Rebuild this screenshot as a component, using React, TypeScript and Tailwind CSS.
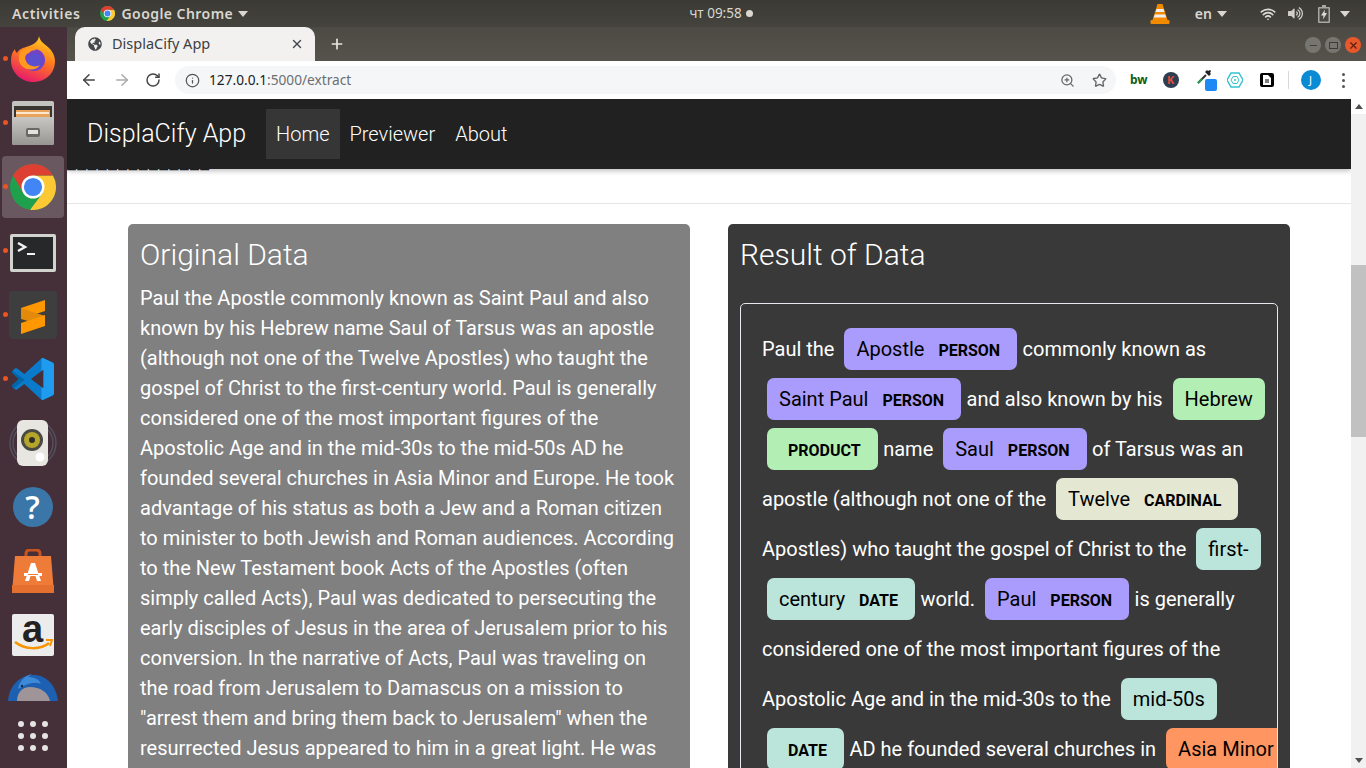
import { ArrowLeft, ArrowRight, RotateCw, Info, ZoomIn, Star, X, Plus, Minus, Wifi } from "lucide-react";
import { FaGlobeAmericas, FaVolumeUp } from "react-icons/fa";

const ROBOTO = "font-['Roboto',sans-serif]";
const UI = "font-['Noto_Sans',sans-serif]";

function Caret({ className = "" }: { className?: string }) {
  return (
    <svg width="10" height="6" viewBox="0 0 10 6" className={className}>
      <path d="M0 0h10L5 6z" fill="currentColor" />
    </svg>
  );
}

function ChromeLogo({ size }: { size: number }) {
  return (
    <svg width={size} height={size} viewBox="0 0 48 48">
      <circle cx="24" cy="24" r="24" fill="#1fa04c" />
      <path d="M44.8 12A24 24 0 0 1 21 47.8L34.4 30 24 12z" fill="#fcc934" />
      <path d="M3.2 12a24 24 0 0 1 41.6 0H24L13.6 30z" fill="#dd3f33" />
      <circle cx="24" cy="24" r="12" fill="#fff" />
      <circle cx="24" cy="24" r="9.5" fill="#4285f4" />
    </svg>
  );
}

function FirefoxIcon() {
  return (
    <svg width="46" height="46" viewBox="0 0 46 46">
      <defs>
        <linearGradient id="ffa" x1="0.7" y1="0" x2="0.3" y2="1">
          <stop offset="0" stopColor="#ffd21f" />
          <stop offset="0.45" stopColor="#ff7a1f" />
          <stop offset="1" stopColor="#e6156f" />
        </linearGradient>
      </defs>
      <path d="M29 0c1 6 6 8 10 12 5 5 6 10 6 13 0 12-9 21-22 21C11 46 1 36 1 25c0-5 1-9 4-12 0 2 1 3 2 4 2-4 6-5 9-6 6-2 12-4 13-11z" fill="url(#ffa)" />
      <circle cx="24" cy="24" r="11" fill="#7542c6" />
      <circle cx="25" cy="25" r="7.500" fill="#5b4fd0" />
      <path d="M11 15c5-3 11-4 16-1-4 0-7 1-8 3-3 1-5 4-3 8 2 5 9 7 14 4-4 6-14 6-19 0-3-4-3-10 0-14z" fill="#ff9a1f" />
    </svg>
  );
}

function FilesIcon() {
  return (
    <svg width="42" height="44" viewBox="0 0 42 44">
      <defs>
        <linearGradient id="fbox" x1="0" y1="0" x2="0" y2="1">
          <stop offset="0" stopColor="#c9c7c3" />
          <stop offset="1" stopColor="#989692" />
        </linearGradient>
      </defs>
      <rect x="0" y="0" width="42" height="44" rx="2" fill="#c4c2be" />
      <rect x="2" y="5" width="38" height="14" fill="#3a3532" />
      <rect x="4" y="9" width="34" height="8" fill="#e8a35d" />
      <rect x="4" y="11" width="33" height="2" fill="#fbe8cf" />
      <rect x="0" y="16" width="42" height="28" rx="2" fill="url(#fbox)" />
      <rect x="14" y="27" width="14" height="9" rx="2" fill="#6a6865" />
      <rect x="16" y="29" width="10" height="4" fill="#e4e2de" />
    </svg>
  );
}

function TerminalIcon() {
  return (
    <svg width="46" height="38" viewBox="0 0 46 38" className="mt-1">
      <rect width="46" height="38" rx="2" fill="#d2d2ce" />
      <rect x="3" y="3" width="40" height="32" fill="#26282a" />
      <path d="M8 9l7 4-7 4" fill="none" stroke="#f2f2f2" strokeWidth="2.500" />
      <rect x="17" y="19" width="8" height="2" fill="#f2f2f2" />
    </svg>
  );
}

function SublimeIcon() {
  return (
    <svg width="48" height="48" viewBox="0 0 48 48">
      <rect width="48" height="48" rx="4" fill="#3e3e3e" />
      <path d="M36 9v11L12 28V17z" fill="#ff9800" />
      <path d="M12 28l24 7v-10L12 17z" fill="#e38a0a" />
      <path d="M36 24v11L12 43V32z" fill="#ff9800" />
    </svg>
  );
}

function VscodeIcon() {
  const d =
    "M70.9 99.3c1.6.6 3.4.6 5-.2l20.6-9.9c2.1-1 3.5-3.2 3.5-5.6V16.4c0-2.4-1.4-4.6-3.5-5.6L75.9.9c-2.1-1-4.5-.8-6.4.6-.3.2-.5.4-.7.6L29.4 38 12.2 25c-1.6-1.2-3.8-1.1-5.3.2l-5.5 5c-1.8 1.7-1.8 4.5 0 6.2L16.2 50 1.4 63.6c-1.8 1.7-1.8 4.5 0 6.1l5.5 5c1.5 1.4 3.7 1.5 5.3.3L29.4 62l39.4 36c.6.6 1.3 1 2.1 1.3zM75 27.3 45.1 50 75 72.7z";
  return (
    <svg width="42" height="42" viewBox="0 0 100 100">
      <defs>
        <clipPath id="vsc">
          <path d={d} clipRule="evenodd" />
        </clipPath>
      </defs>
      <path d={d} fill="#0a7bcb" fillRule="evenodd" />
      <g clipPath="url(#vsc)">
        <rect x="70" y="0" width="30" height="100" fill="#1f9cf0" />
        <path d="M0 30l30 22L0 75z" fill="#0065a9" />
      </g>
    </svg>
  );
}

function SpeakerIcon() {
  return (
    <svg width="50" height="46" viewBox="0 0 50 46">
      <circle cx="25" cy="23" r="23" fill="none" stroke="#6f7f95" strokeOpacity="0.4" strokeWidth="1.5" />
      <circle cx="25" cy="23" r="20" fill="none" stroke="#6f7f95" strokeOpacity="0.4" strokeWidth="1.5" />
      <rect x="9" y="0" width="31" height="46" rx="6" fill="#e8e6e0" />
      <circle cx="24" cy="20" r="11" fill="#4a4a44" />
      <circle cx="24" cy="20" r="8" fill="#b5a52b" />
      <circle cx="24" cy="20" r="3" fill="#2f2d25" />
      <circle cx="32" cy="37" r="4.5" fill="#fff" />
    </svg>
  );
}

function HelpIcon() {
  return (
    <div className="flex h-10 w-10 items-center justify-center rounded-full bg-[#3a76a8] font-['Open_Sans',sans-serif] text-[32px] font-semibold leading-none text-white">
      ?
    </div>
  );
}

function StoreIcon() {
  return (
    <svg width="42" height="44" viewBox="0 0 42 44">
      <path d="M14 8V5c0-3 2-4 4-4h6c2 0 4 1 4 4v3" fill="none" stroke="#c9531f" strokeWidth="3" />
      <path d="M3 7h36l3 37H0z" fill="#ef7b38" />
      <path d="M0 36h42v8H0z" fill="#e46f2e" />
      <path d="M19 14h4l6 18h-4l-1.500-5h-5L17 32h-4z" fill="#fff" />
      <rect x="12" y="24" width="18" height="3" fill="#fff" />
      <rect x="16" y="25" width="10" height="1" fill="#ef7b38" />
    </svg>
  );
}

function AmazonIcon() {
  return (
    <div className="relative h-[42px] w-[42px] rounded-[2px] bg-[#ececec]">
      <span className="absolute left-0 right-0 top-[-3px] text-center font-['Liberation_Sans',sans-serif] text-[38px] font-bold leading-[36px] text-[#222]">
        a
      </span>
      <svg width="42" height="42" viewBox="0 0 42 42" className="absolute left-0 top-0">
        <path d="M3 28c10 8 26 8 34 1" fill="none" stroke="#f79400" strokeWidth="2.500" />
        <path d="M34 26l6 0-2 6" fill="none" stroke="#f79400" strokeWidth="2" />
      </svg>
    </div>
  );
}

function ThunderbirdIcon() {
  return (
    <svg width="50" height="30" viewBox="0 0 50 30">
      <path d="M0 28C1 14 10 3 24 2c14-1 24 10 26 26z" fill="#1d5fb0" />
      <path d="M9 28c0-8 5-14 13-14 10 0 18 5 20 14z" fill="#9f9498" />
      <path d="M10 16c1-7 7-14 14-15l-4 3c6 0 11 2 13 7-7-3-15 0-23 5z" fill="#3d8ad8" />
      <circle cx="14" cy="13" r="1.200" fill="#1b2b44" />
    </svg>
  );
}

function VlcIcon() {
  return (
    <svg width="20" height="22" viewBox="0 0 20 22">
      <path d="M7.500 1h5l5 16h-15z" fill="#f28a00" />
      <path d="M6.500 6h7l1 3h-9zM4.800 11.500h10.400l1 3H3.800z" fill="#ededed" />
      <rect x="0.500" y="17" width="19" height="4" rx="1" fill="#f28a00" />
    </svg>
  );
}

function BatteryIcon() {
  return (
    <svg width="12" height="18" viewBox="0 0 12 18">
      <path d="M4 0h4v2h3a1 1 0 0 1 1 1v14a1 1 0 0 1-1 1H1a1 1 0 0 1-1-1V3a1 1 0 0 1 1-1h3z" fill="#aaa8a2" />
      <rect x="1.500" y="3.500" width="9" height="13" fill="#4a4842" />
      <path d="M7 4.500 3 10.500h2.500L5 14.500l4-6.500H6.500z" fill="#dedcd6" />
    </svg>
  );
}

function TopBar() {
  return (
    <div className={`flex h-[27px] shrink-0 items-center justify-between bg-gradient-to-b from-[#3b3a35] to-[#45433d] text-[14px] font-semibold text-[#d9d7d0] ${UI}`}>
      <div className="flex items-center">
        <span className="ml-3 tracking-[0.6px]">Activities</span>
        <span className="ml-[20px]"><ChromeLogo size={15} /></span>
        <span className="ml-[6px] tracking-[0.45px]">Google Chrome</span>
        <Caret className="ml-[5px]" />
      </div>
      <div className="ml-[44px] flex items-center gap-[4px] text-[13.500px] font-normal">
        чт 09:58
        <span className="h-[7px] w-[7px] rounded-full bg-[#d9d7d0]" />
      </div>
      <div className="mr-[16px] flex items-center">
        <VlcIcon />
        <span className="ml-[25px]">en</span>
        <Caret className="ml-[5px]" />
        <Wifi size={16} strokeWidth={2.5} className="ml-[33px] text-[#dedcd6]" />
        <FaVolumeUp size={15} className="ml-[12px] text-[#cfcdc6]" />
        <span className="ml-[15px]"><BatteryIcon /></span>
        <Caret className="ml-[10px]" />
      </div>
    </div>
  );
}

function DockItem({ children, dot, active }: { children: React.ReactNode; dot?: boolean; active?: boolean }) {
  return (
    <div className="relative flex h-16 shrink-0 items-center justify-center">
      {active && <div className="absolute bottom-[1px] left-[2px] right-[3px] top-[1px] rounded-[4px] bg-white/20" />}
      {dot && <div className="absolute left-[3px] top-[29px] h-[5px] w-[5px] rounded-full bg-[#e95420]" />}
      <div className="relative flex items-center justify-center pr-[2px]">{children}</div>
    </div>
  );
}

function Dock() {
  return (
    <div className="relative w-[67px] shrink-0 overflow-hidden bg-[#452f39]">
      <DockItem dot><FirefoxIcon /></DockItem>
      <DockItem dot><FilesIcon /></DockItem>
      <DockItem dot active><ChromeLogo size={46} /></DockItem>
      <DockItem dot><TerminalIcon /></DockItem>
      <DockItem dot><SublimeIcon /></DockItem>
      <DockItem dot><VscodeIcon /></DockItem>
      <DockItem><SpeakerIcon /></DockItem>
      <DockItem><HelpIcon /></DockItem>
      <DockItem><StoreIcon /></DockItem>
      <DockItem><AmazonIcon /></DockItem>
      <div className="flex h-16 shrink-0 justify-center pr-[2px] pt-[6px]"><ThunderbirdIcon /></div>
      <div className="absolute left-[18px] top-[694px] grid grid-cols-3 gap-[6px]">
        {Array.from({ length: 9 }).map((_, i) => (
          <span key={i} className="h-[6px] w-[6px] rounded-full bg-[#e6e4e2]" />
        ))}
      </div>
    </div>
  );
}

function ChromeFrame() {
  return (
    <div className="shrink-0">
      <div className={`flex h-[34px] items-end justify-between bg-gradient-to-b from-[#4c4a44] to-[#56534c] ${UI}`}>
        <div className="flex h-full items-center">
          <div className="ml-[8px] flex h-full w-[240px] items-center rounded-t-[10px] bg-[#f2f1f0] pl-[13px] pr-[11px] text-[14.500px] text-[#3c4043]">
            <FaGlobeAmericas size={14} className="text-[#45484c]" />
            <span className="ml-[10px] flex-1">DisplaCify App</span>
            <X size={14} strokeWidth={2.5} className="text-[#45484c]" />
          </div>
          <Plus size={16} strokeWidth={2.5} className="ml-[14px] text-[#e8e6e1]" />
        </div>
        <div className="mb-[8px] mr-[5px] flex gap-[4px]">
          <span className="flex h-4 w-4 items-center justify-center rounded-full bg-[#77756f] text-[#3c3b37]"><Minus size={11} /></span>
          <span className="flex h-4 w-4 items-center justify-center rounded-full bg-[#77756f] text-[#3c3b37]"><span className="h-[7px] w-[9px] border border-[#3c3b37]" /></span>
          <span className="flex h-4 w-4 items-center justify-center rounded-full bg-[#e9582a] text-[#5a2010]"><X size={11} strokeWidth={2.5} /></span>
        </div>
      </div>
      <div className={`flex h-[38px] items-center bg-white ${UI}`}>
        <ArrowLeft size={18} strokeWidth={2} className="ml-[13px] text-[#444]" />
        <ArrowRight size={18} strokeWidth={2} className="ml-[15px] text-[#aaa]" />
        <RotateCw size={16} strokeWidth={2.200} className="ml-[14px] text-[#444]" />
        <div className="ml-[14px] flex h-7 w-[941px] items-center rounded-full bg-[#f5f6f7] pl-[10px] pr-[8px] text-[13.700px]">
          <Info size={15} className="text-[#555]" />
          <span className="ml-[9px] text-[#202124]">127.0.0.1</span>
          <span className="text-[#6b6e72]">:5000/extract</span>
          <ZoomIn size={15} className="ml-auto text-[#666]" />
          <Star size={15} strokeWidth={2.200} className="ml-[17px] mr-[1px] text-[#666]" />
        </div>
        <span className={`ml-[14px] text-[12px] font-bold leading-none text-[#0f5c10] ${UI}`}>bw</span>
        <span className="ml-[15px] flex h-4 w-4 items-center justify-center rounded-full bg-[#2c3e50] text-[11px] font-bold text-[#e74c3c]">K</span>
        <span className="relative ml-[18px] h-5 w-5">
          <svg width="16" height="16" viewBox="0 0 16 16" className="absolute left-0 top-[-2px]">
            <path d="M1 15 9 7" stroke="#333" strokeWidth="2" />
            <path d="M1 15 5 11" stroke="#2a9d55" strokeWidth="2" />
            <path d="M8 4l4 4 2-2-1-1 1-2-1-1-2 1-1-1z" fill="#222" />
          </svg>
          <span className="absolute left-[8px] top-[9px] h-3 w-3 rounded-[2px] bg-[#1e88f5]" />
        </span>
        <svg width="16" height="16" viewBox="0 0 16 16" className="ml-[10px]">
          <path d="M4 1h8l4 7-4 7H4L0 8z" fill="none" stroke="#35c3d0" strokeWidth="1.500" />
          <path d="M6 4.500h4l2 3.500-2 3.500H6L4 8z" fill="none" stroke="#35c3d0" />
          <circle cx="8" cy="8" r="1" fill="#35c3d0" />
        </svg>
        <span className="ml-[17px] flex h-[14px] w-[14px] items-center justify-center rounded-[2px] bg-black">
          <svg width="8" height="10" viewBox="0 0 8 10">
            <path d="M0 0h5l3 3v7H0z" fill="#fff" />
            <path d="M2 5h4M2 7h4" stroke="#000" />
          </svg>
        </span>
        <span className="ml-[14px] h-[18px] w-px bg-[#d8d8d8]" />
        <span className="ml-[12px] flex h-5 w-5 items-center justify-center rounded-full bg-[#0b8bd3] text-[11px] text-white">J</span>
        <span className="ml-[21px] flex flex-col gap-[3px]">
          <i className="h-[3px] w-[3px] rounded-full bg-[#555]" />
          <i className="h-[3px] w-[3px] rounded-full bg-[#555]" />
          <i className="h-[3px] w-[3px] rounded-full bg-[#555]" />
        </span>
      </div>
    </div>
  );
}

function Ent({ text, label, bg }: { text: string; label: string; bg: string }) {
  return (
    <mark className={`ml-[5px] mr-[0.5px] rounded-[7px] px-3 py-[9px] leading-none text-[#000] box-decoration-clone ${bg}`}>
      {text}{" "}
      <span className="ml-[9px] mr-[5px] align-middle text-[16px] font-bold leading-none">{label}</span>
    </mark>
  );
}

const PERSON = "bg-[#aa9cfc]";
const PRODUCT = "bg-[#b3efb5]";
const CARDINAL = "bg-[#e4e7d2]";
const DATE = "bg-[#bbe4da]";
const LOC = "bg-[#ff9561]";

function Scrollbar() {
  return (
    <div className="flex w-[15px] shrink-0 flex-col bg-[#f1f1f1]">
      <div className="flex h-[15px] items-center justify-center bg-white text-[#505050]">
        <svg width="8" height="5" viewBox="0 0 8 5"><path d="M4 0l4 5H0z" fill="currentColor" /></svg>
      </div>
      <div className="mt-[151px] h-[172px] bg-[#c1c1c1]" />
      <div className="mt-auto flex h-[15px] items-center justify-center text-[#505050]">
        <svg width="8" height="5" viewBox="0 0 8 5"><path d="M0 0h8L4 5z" fill="currentColor" /></svg>
      </div>
    </div>
  );
}

function Page() {
  return (
    <div className="flex min-h-0 flex-1">
      <div className={`flex min-w-0 flex-1 flex-col overflow-hidden bg-white ${ROBOTO}`}>
        <nav className="relative z-10 flex h-[70px] shrink-0 items-center bg-[#212121] pl-5 text-white shadow-[0_2px_5px_rgba(0,0,0,0.25)]">
          <span className="text-[25px] font-light">DisplaCify App</span>
          <ul className="ml-5 flex text-[20px] font-light">
            <li className="flex h-[50px] items-center bg-[#363636] px-[10px]">Home</li>
            <li className="flex h-[50px] items-center px-[10px]">Previewer</li>
            <li className="flex h-[50px] items-center px-[10px]">About</li>
          </ul>
        </nav>
        <div className="h-[35px] shrink-0 overflow-hidden border-b border-[#e6e6e6]">
          <div className="mt-[-8px] font-['Liberation_Sans',sans-serif] text-[16px] leading-[16px] tracking-[1.350px] text-[#212529]">––––––––––––––</div>
        </div>
        <div className="grid min-h-0 flex-1 grid-cols-2 gap-[38px] overflow-hidden px-[61px] pt-5">
          <div className="rounded-t-[5px] bg-[#808080] px-3 pt-3 text-white">
            <h3 className="mb-[9px] text-[30px] font-light leading-[38px]">Original Data</h3>
            <p className="text-[20px] leading-[30px]">
              Paul the Apostle commonly known as Saint Paul and also known by his Hebrew name Saul of Tarsus was an apostle (although not one of the Twelve Apostles) who taught the gospel of Christ to the first-century world. Paul is generally considered one of the most important figures of the Apostolic Age and in the mid-30s to the mid-50s AD he founded several churches in Asia Minor and Europe. He took advantage of his status as both a Jew and a Roman citizen to minister to both Jewish and Roman audiences. According to the New Testament book Acts of the Apostles (often simply called Acts), Paul was dedicated to persecuting the early disciples of Jesus in the area of Jerusalem prior to his conversion. In the narrative of Acts, Paul was traveling on the road from Jerusalem to Damascus on a mission to "arrest them and bring them back to Jerusalem" when the resurrected Jesus appeared to him in a great light. He was
            </p>
          </div>
          <div className="rounded-t-[5px] bg-[#393939] px-3 pt-3 text-white">
            <h3 className="mb-[29px] text-[30px] font-light leading-[38px]">Result of Data</h3>
            <div className="overflow-hidden rounded-[5px] border border-[#e6e9ef] pl-[21px] pr-[2px] pt-5 text-[20px] leading-[50px]">
              Paul the{" "}
              <Ent text="Apostle" label="PERSON" bg={PERSON} /> commonly known as{" "}
              <Ent text={"Saint\u00a0Paul"} label="PERSON" bg={PERSON} /> and also known by his{" "}
              <Ent text="Hebrew" label="PRODUCT" bg={PRODUCT} /> name{" "}
              <Ent text="Saul" label="PERSON" bg={PERSON} /> of Tarsus was an apostle (although not one of the{" "}
              <Ent text="Twelve" label="CARDINAL" bg={CARDINAL} /> Apostles) who taught the gospel of Christ to the{" "}
              <Ent text="first-century" label="DATE" bg={DATE} /> world.{" "}
              <Ent text="Paul" label="PERSON" bg={PERSON} /> is generally considered one of the most important figures of the Apostolic Age and in the mid-30s to the{" "}
              <Ent text="mid-50s" label="DATE" bg={DATE} /> AD he founded several churches in{" "}
              <Ent text="Asia Minor" label="LOC" bg={LOC} /> and Europe.
            </div>
          </div>
        </div>
      </div>
      <Scrollbar />
    </div>
  );
}

export default function App() {
  return (
    <div className="flex h-screen w-screen flex-col overflow-hidden bg-white">
      <TopBar />
      <div className="flex min-h-0 flex-1">
        <Dock />
        <div className="flex min-w-0 flex-1 flex-col">
          <ChromeFrame />
          <Page />
        </div>
      </div>
    </div>
  );
}
